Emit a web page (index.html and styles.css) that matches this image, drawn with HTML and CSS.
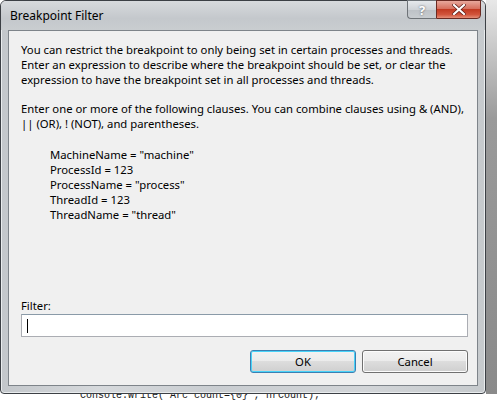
FILE: index.html
```html
<!DOCTYPE html>
<html lang="en">
<head>
  <meta charset="UTF-8">
  <title>Breakpoint Filter</title>
  <link rel="stylesheet" href="styles.css">
</head>
<body>
  <div class="desktop">
    <div class="window">
      <div class="titlebar">
        <span class="title">Breakpoint Filter</span>
        <div class="caption-btns">
          <div class="cap-btn help">?</div>
          <div class="cap-btn close">
            <svg width="14" height="11" viewBox="0 0 14 11">
              <path d="M2 1 L12 10 M12 1 L2 10" stroke="#5a1a14" stroke-width="3.6" stroke-linecap="square"/>
              <path d="M2 1 L12 10 M12 1 L2 10" stroke="#ffffff" stroke-width="2.2" stroke-linecap="square"/>
            </svg>
          </div>
        </div>
      </div>
      <div class="client">
        <p class="text">You can restrict the breakpoint to only being set in certain processes and threads.<br>
        Enter an expression to describe where the breakpoint should be set, or clear the<br>
        expression to have the breakpoint set in all processes and threads.</p>

        <p class="text">Enter one or more of the following clauses. You can combine clauses using &amp; (AND),<br>
        || (OR), ! (NOT), and parentheses.</p>

        <p class="text clauses">MachineName = "machine"<br>
        ProcessId = 123<br>
        ProcessName = "process"<br>
        ThreadId = 123<br>
        ThreadName = "thread"</p>

        <div class="spacer"></div>

        <label class="filter-label" for="filter">Filter:</label>
        <div class="filter-box"><span class="caret"></span></div>

        <div class="btn-group">
          <button class="btn default">OK</button>
          <button class="btn">Cancel</button>
        </div>
      </div>
    </div>
    <div class="side"></div>
  </div>
  <div class="editor">
    <code>Console.Write("Arc count={0}", nrCount);</code>
  </div>
</body>
</html>
```

FILE: styles.css
```css
body {
  margin: 0;
  width: 497px;
  height: 401px;
  overflow: hidden;
  background: #ffffff;
  font-family: "Noto Sans", "Open Sans", sans-serif;
}
.desktop {
  display: flex;
  height: 394px;
}
.side {
  flex: 1;
  background: linear-gradient(#e8e8e8, #9a9a9a 30%, #8a8a8a);
}
.window {
  width: 486px;
  height: 394px;
  box-sizing: border-box;
  border: 1px solid #3c4045;
  border-radius: 6px 6px 4px 4px;
  background: linear-gradient(90deg, #c3c7cb, #d6d9dc 20%, #c9cdd1 45%, #d2d5d8 75%, #c6cacd);
  display: flex;
  flex-direction: column;
  box-shadow: inset 0 0 0 1px #e9ecee;
}
.titlebar {
  height: 29px;
  display: flex;
  align-items: flex-start;
  justify-content: space-between;
  background: linear-gradient(#d7dadd, #c4c8cc 60%, #c9cdd0);
  border-radius: 5px 5px 0 0;
}
.title {
  font-size: 12px;
  color: #000;
  padding: 6px 0 0 9px;
}
.caption-btns {
  display: flex;
  margin-right: 4px;
  margin-top: -1px;
}
.cap-btn {
  height: 19px;
  box-sizing: border-box;
  border: 1px solid #6e7378;
  display: flex;
  align-items: center;
  justify-content: center;
}
.help {
  width: 29px;
  border-right: none;
  border-radius: 0 0 0 4px;
  background: linear-gradient(#e6e9ec, #cfd3d7 50%, #bcc1c6 51%, #c8ccd0);
  color: #ffffff;
  font-size: 13px;
  font-weight: bold;
  text-shadow: 0 0 2px #4a5058;
}
.close {
  width: 45px;
  border-color: #6a2a22;
  border-radius: 0 0 4px 0;
  background: linear-gradient(#e8a89c, #d6705e 45%, #c23a22 50%, #d2553c 80%, #e58e78);
}
.client {
  flex: 1;
  margin: 0 7px 7px 7px;
  background: #f0f0f0;
  border: 1px solid #7e848a;
  display: flex;
  flex-direction: column;
  padding: 11px 9px 12px 12px;
}
.text {
  margin: 0 0 14px 0;
  font-size: 11.3px;
  line-height: 15px;
  color: #000;
}
.clauses {
  padding-left: 29px;
  margin-top: 2px;
}
.spacer {
  flex: 1;
}
.filter-label {
  font-size: 11.3px;
  line-height: 15px;
  margin-bottom: 1px;
}
.filter-box {
  height: 23px;
  box-sizing: border-box;
  border: 1px solid #abadb3;
  border-top-color: #8a9aa8;
  background: #ffffff;
  padding: 4px 5px;
}
.caret {
  display: block;
  width: 1px;
  height: 14px;
  background: #000;
}
.btn-group {
  display: flex;
  justify-content: flex-end;
  gap: 6px;
  margin-top: 13px;
}
.btn {
  width: 106px;
  height: 23px;
  font-family: inherit;
  font-size: 11.3px;
  border: 1px solid #707070;
  border-radius: 3px;
  background: linear-gradient(#f2f2f2, #ebebeb 49%, #dddddd 50%, #cfcfcf);
  box-shadow: inset 0 0 0 1px #fcfcfc;
  padding: 0;
}
.default {
  border-color: #3c7fb1;
  box-shadow: inset 0 0 0 1px #48d3f9;
}
.editor {
  height: 7px;
  overflow: hidden;
  padding-left: 80px;
  background: #ffffff;
}
.editor code {
  display: block;
  margin-top: -4px;
  font-family: "Liberation Mono", monospace;
  font-size: 10px;
  line-height: 12px;
  color: #1a1a1a;
}
```
